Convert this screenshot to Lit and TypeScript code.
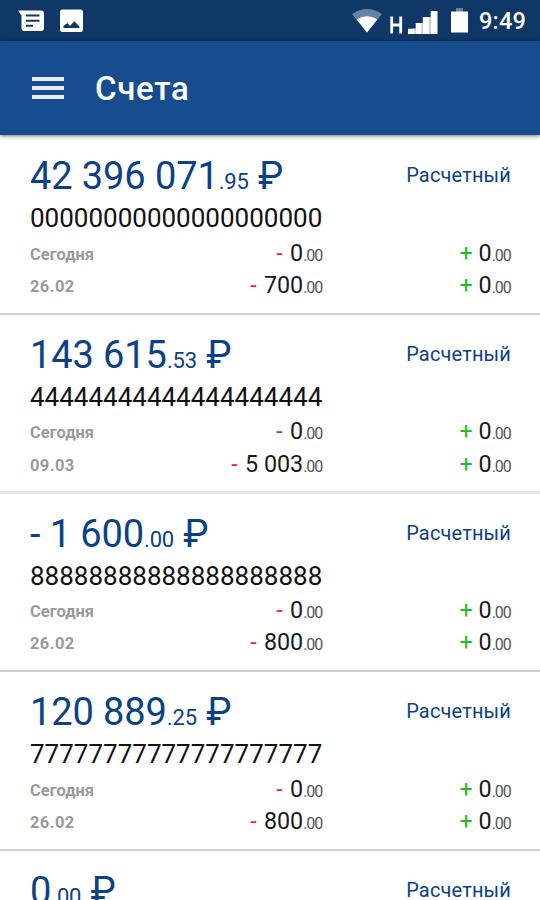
import { LitElement, html, css, svg } from "lit";
import { customElement, property } from "lit/decorators.js";

interface Turnover {
  label: string;
  debit: string;
  credit: string;
}

interface Account {
  whole: string;
  cents: string;
  number: string;
  kind: string;
  turnovers: Turnover[];
}

const makeAccount = (whole: string, cents: string, digit: string, date: string, debit: string): Account => ({
  whole,
  cents,
  number: digit.repeat(20),
  kind: "Расчетный",
  turnovers: [
    { label: "Сегодня", debit: "0", credit: "0" },
    { label: date, debit, credit: "0" },
  ],
});

const ACCOUNTS: Account[] = [
  makeAccount("42 396 071", "95", "0", "26.02", "700"),
  makeAccount("143 615", "53", "4", "09.03", "5 003"),
  makeAccount("- 1 600", "00", "8", "26.02", "800"),
  makeAccount("120 889", "25", "7", "26.02", "800"),
  { whole: "0", cents: "00", number: "", kind: "Расчетный", turnovers: [] },
];

@customElement("status-bar")
export class StatusBar extends LitElement {
  static styles = css`
    :host {
      display: flex;
      justify-content: space-between;
      height: 41px;
      background: #0f3866;
      color: #fff;
    }
    svg {
      display: block;
    }
    .side {
      display: flex;
    }
    .clock {
      width: 61px;
      font: 500 23.5px/43px Roboto, sans-serif;
      letter-spacing: 0.2px;
      white-space: nowrap;
    }
  `;

  render() {
    return html`
      <div class="side">
        <svg width="100" height="41" viewBox="0 0 100 41">
          ${svg`
            <path fill="#fff" d="M18 10.5H41Q44 10.5 44 13.5V28Q44 31 41 31H24.5Q21.5 31 21.5 28V15.5Z"/>
            <path stroke="#0f3866" stroke-width="2" d="M26 15.5H39.5M26 20.7H39.5M26 25.8H33"/>
            <rect x="60" y="9.5" width="23" height="22.5" rx="2.5" fill="#fff"/>
            <path fill="#0f3866" d="M63.5 28V26L67.3 23L70 26L74.2 21.2L79.5 26.5V28Z"/>`}
        </svg>
      </div>
      <div class="side">
        <svg width="130" height="41" viewBox="349 0 130 41">
          ${svg`
            <path fill="#6583a5" d="M352 14Q367 4 382 14L367 32.5Z"/>
            <path fill="#fff" d="M356.7 19.5Q367 13 377.3 19.5L367 32.5Z"/>
            <path fill="none" stroke="#fff" stroke-width="2.8" d="M391.7 16.5V33.5M400.7 16.5V33.5M391.7 25H400.7"/>
            <path fill="#b3c2d4" d="M413 28.5H417V34H413ZM420 23H424V34H420ZM428 17H432V34H428Z"/>
            <path fill="#fff" d="M408 28.7H414.5V34H408ZM415.7 23H421.5V34H415.7ZM422.8 17H429.3V34H422.8ZM430.7 11H437.5V34H430.7Z"/>
            <path fill="#6583a5" d="M456 8H463V12H456Z"/>
            <path fill="#fff" d="M451 11.5H468V32.5H451Z"/>`}
        </svg>
        <span class="clock">9:49</span>
      </div>
    `;
  }
}

@customElement("account-card")
export class AccountCard extends LitElement {
  @property({ attribute: false }) account!: Account;

  static styles = css`
    :host {
      display: block;
      box-sizing: border-box;
      height: 178.75px;
      padding: 18px 29px 0 30px;
      border-bottom: 2px solid #cfcfcf;
      background: #fff;
      white-space: nowrap;
    }
    :host(.soft) {
      border-bottom: 3px solid #e6e6e6;
    }
    .head {
      display: flex;
      justify-content: space-between;
      color: #0c4186;
    }
    .amount {
      font-size: 38px;
      line-height: 44px;
      letter-spacing: -0.1px;
    }
    .cents {
      font-size: 22px;
      line-height: 1;
      letter-spacing: -0.2px;
    }
    .kind {
      font-size: 20px;
      line-height: 43px;
      letter-spacing: 0.15px;
    }
    .number {
      margin-top: 4px;
      font-size: 26px;
      line-height: 32px;
      color: #111;
    }
    .turnovers {
      margin-top: 2.5px;
    }
    .row {
      display: grid;
      grid-template-columns: 110px 181.5px 1fr;
      font-size: 23.3px;
      line-height: 32.3px;
      color: #1a1a1a;
    }
    .label {
      font-size: 16.5px;
      font-weight: 700;
      line-height: 35px;
      height: 32.3px;
      color: #9a9a9a;
    }
    .date {
      letter-spacing: 0.4px;
    }
    .value {
      text-align: right;
    }
    .credit {
      padding-right: 1px;
    }
    .minor {
      font-size: 16px;
      line-height: 1;
      letter-spacing: -1.1px;
      margin-right: -0.6px;
      color: #555;
    }
    .minus {
      color: #ec2a2a;
      margin-right: 1.5px;
    }
    .plus {
      color: #1fbf24;
    }
  `;

  render() {
    const a = this.account;
    return html`
      <div class="head">
        <span class="amount">${a.whole}<span class="cents">.${a.cents}</span> ₽</span>
        <span class="kind">${a.kind}</span>
      </div>
      <div class="number">${a.number}</div>
      <div class="turnovers">
        ${a.turnovers.map(
          (t, i) => html`<div class="row">
            <span class="label ${i > 0 ? "date" : ""}">${t.label}</span>
            <span class="value"><span class="minus">-</span> ${t.debit}<span class="minor">.00</span></span>
            <span class="value credit"><span class="plus">+</span> ${t.credit}<span class="minor">.00</span></span>
          </div>`
        )}
      </div>
    `;
  }
}

@customElement("app-root")
export class AppRoot extends LitElement {
  static styles = css`
    :host {
      display: flex;
      flex-direction: column;
      height: 900px;
      overflow: hidden;
      background: #fff;
      font-family: Roboto, sans-serif;
    }
    .toolbar {
      position: relative;
      display: flex;
      align-items: center;
      flex: none;
      box-sizing: border-box;
      height: 94px;
      padding: 1px 0 0 32px;
      gap: 31px;
      background: #174d8e;
      box-shadow: 0 1px 4px rgba(0, 0, 0, 0.55);
    }
    .menu {
      display: flex;
      flex-direction: column;
      gap: 5px;
      width: 32px;
      margin-top: -2px;
    }
    .bar {
      height: 4px;
      background: #e4edf8;
    }
    .title {
      color: #fff;
      font-size: 33px;
      font-weight: 500;
      line-height: 40px;
      letter-spacing: 0.7px;
    }
    .list {
      flex: none;
      padding-top: 1px;
    }
  `;

  render() {
    return html`
      <status-bar></status-bar>
      <div class="toolbar">
        <div class="menu">
          <div class="bar"></div>
          <div class="bar"></div>
          <div class="bar"></div>
        </div>
        <div class="title">Счета</div>
      </div>
      <div class="list">
        ${ACCOUNTS.map((a, i) => html`<account-card class=${i === 1 ? "soft" : ""} .account=${a}></account-card>`)}
      </div>
    `;
  }
}
